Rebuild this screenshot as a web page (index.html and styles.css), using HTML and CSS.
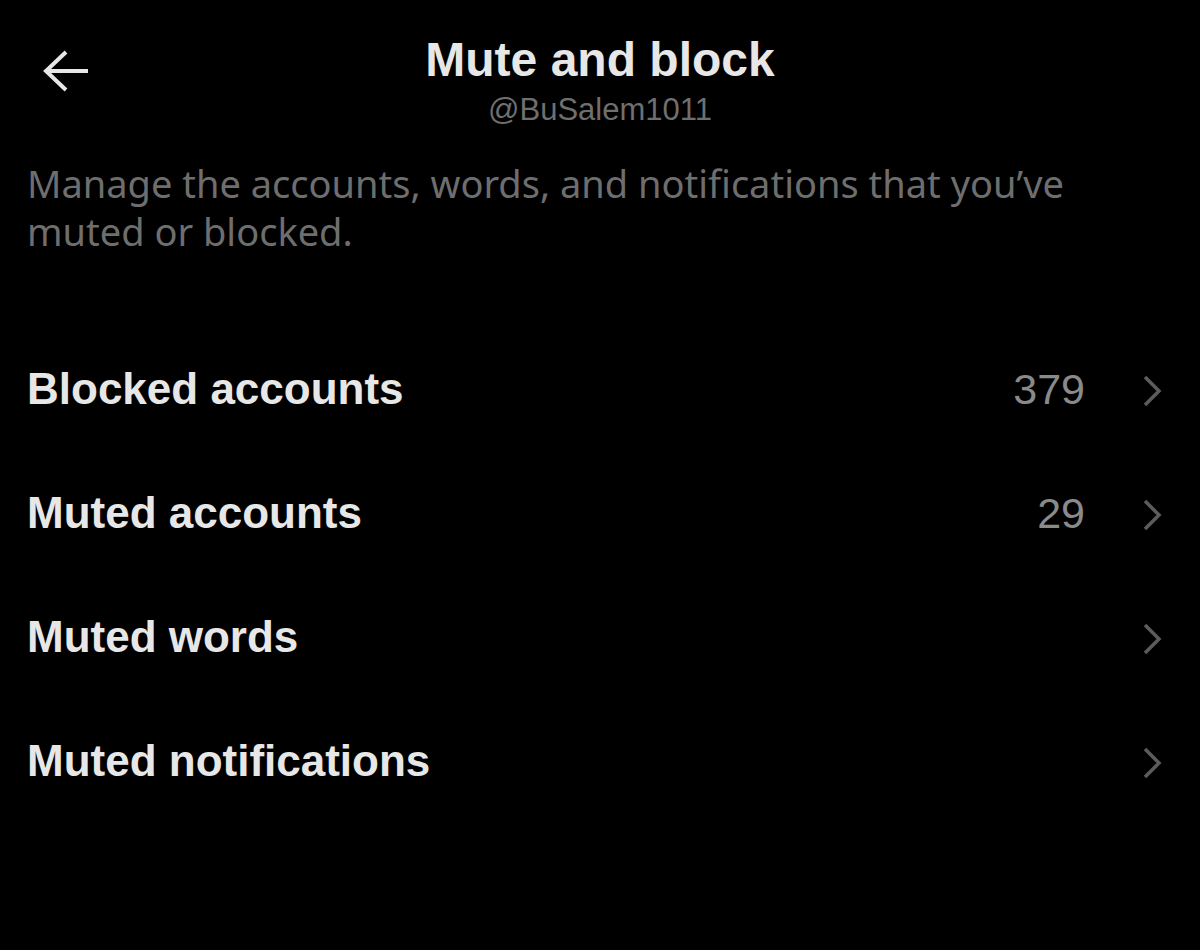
FILE: index.html
```html
<!DOCTYPE html>
<html lang="en">
<head>
  <meta charset="UTF-8">
  <title>Mute and block</title>
  <link rel="stylesheet" href="styles.css">
</head>
<body>
  <div class="header">
    <a class="back" href="#">
      <svg width="48" height="42" viewBox="0 0 48 42">
        <path d="M24 2 L4 21 L24 40 M4 21 H46" fill="none" stroke="#e7e7e7" stroke-width="4"/>
      </svg>
    </a>
    <div class="title-box">
      <h1>Mute and block</h1>
      <div class="handle">@BuSalem1011</div>
    </div>
    <div></div>
  </div>

  <p class="description">Manage the accounts, words, and notifications that you’ve muted or blocked.</p>

  <div class="settings">
    <a class="row" href="#">
      <span class="label">Blocked accounts</span>
      <span class="count">379</span>
      <svg class="chevron" width="20" height="32" viewBox="0 0 20 32"><path d="M3 2 L17 16 L3 30" fill="none" stroke="#5c5c5c" stroke-width="3.5"/></svg>
    </a>
    <a class="row" href="#">
      <span class="label">Muted accounts</span>
      <span class="count">29</span>
      <svg class="chevron" width="20" height="32" viewBox="0 0 20 32"><path d="M3 2 L17 16 L3 30" fill="none" stroke="#5c5c5c" stroke-width="3.5"/></svg>
    </a>
    <a class="row" href="#">
      <span class="label">Muted words</span>
      <svg class="chevron" width="20" height="32" viewBox="0 0 20 32"><path d="M3 2 L17 16 L3 30" fill="none" stroke="#5c5c5c" stroke-width="3.5"/></svg>
    </a>
    <a class="row" href="#">
      <span class="label">Muted notifications</span>
      <svg class="chevron" width="20" height="32" viewBox="0 0 20 32"><path d="M3 2 L17 16 L3 30" fill="none" stroke="#5c5c5c" stroke-width="3.5"/></svg>
    </a>
  </div>
</body>
</html>
```

FILE: styles.css
```css
body {
  margin: 0;
  background: #000;
  font-family: "Liberation Sans", Arial, sans-serif;
  color: #e7e7e7;
  width: 1200px;
  height: 950px;
  overflow: hidden;
}
.header {
  display: grid;
  grid-template-columns: 1fr auto 1fr;
  align-items: center;
  padding-top: 31px;
}
.back {
  display: flex;
  padding-left: 42px;
  margin-top: -19px;
}
.title-box {
  text-align: center;
}
h1 {
  font-size: 48px;
  line-height: 58px;
  font-weight: bold;
  margin: 0;
  color: #e7e7e7;
}
.handle {
  font-size: 31px;
  line-height: 38px;
  color: #6f6f6f;
  margin-top: 2px;
}
.description {
  margin: 30px 60px 0 27px;
  font-family: "Noto Sans", sans-serif;
  font-size: 38px;
  line-height: 48px;
  color: #6e6e6e;
}
.settings {
  margin-top: 72px;
  display: flex;
  flex-direction: column;
}
.row {
  display: flex;
  align-items: center;
  height: 124px;
  padding: 0 38px 0 27px;
  text-decoration: none;
  color: #e7e7e7;
}
.label {
  flex: 1;
  font-size: 44px;
  font-weight: bold;
}
.count {
  font-size: 43px;
  color: #8a8a8a;
  margin-right: 57px;
}
.chevron {
  flex: none;
  margin-top: 4px;
}
```
